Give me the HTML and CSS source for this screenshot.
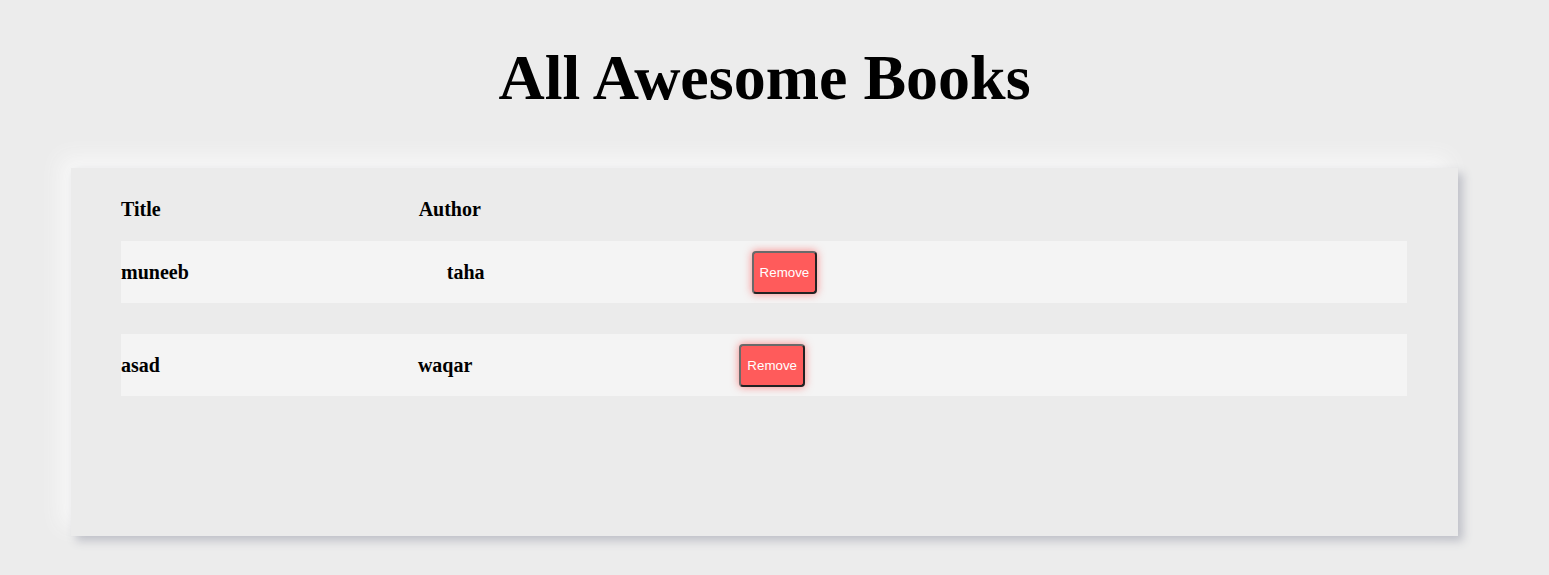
FILE: index.html
```html
<!DOCTYPE html>
<html lang="en">
<head>
<meta charset="utf-8">
<title>Awesome Books</title>
<link rel="stylesheet" href="styles.css">
</head>
<body>
<main class="page">
  <h1 class="page-title">All Awesome Books</h1>
  <section class="card">
    <div class="row row-head">
      <span class="cell">Title</span>
      <span class="cell">Author</span>
    </div>
    <div class="book-list">
      <div class="row book">
        <span class="cell">muneeb</span>
        <span class="cell">taha</span>
        <button class="remove-btn" type="button">Remove</button>
      </div>
      <div class="row book">
        <span class="cell">asad</span>
        <span class="cell">waqar</span>
        <button class="remove-btn" type="button">Remove</button>
      </div>
    </div>
  </section>
</main>
</body>
</html>
```
FILE: styles.css
```css
html, body {
  background: #ececec;
}
body {
  margin: 8px;
  font-family: "Liberation Serif", "Times New Roman", serif;
  color: #000;
}
.page {
  width: 1513px;
  padding-bottom: 20px;
}
.page-title {
  font-size: 64px;
  font-weight: bold;
  text-align: center;
  margin: 33px 0 53px;
  line-height: normal;
}
.card {
  width: 1387px;
  box-sizing: border-box;
  margin: 0 auto;
  min-height: 368px;
  padding: 30px 51px 140px 50px;
  background: #ebebeb;
  box-shadow: 5px 5px 9px #bfc0c8, -10px -10px 20px #f8f8f8;
}
.row {
  display: flex;
  align-items: center;
  gap: 258px;
  font-size: 20px;
  font-weight: bold;
}
.row-head {
  margin-bottom: 20px;
}
.book-list {
  display: flex;
  flex-direction: column;
  gap: 31px;
}
.book {
  height: 62px;
  background: #f4f4f4;
}
.remove-btn {
  margin-left: 9px;
  font-family: "Liberation Sans", Arial, sans-serif;
  font-size: 13.333px;
  color: #fff;
  background: #ff5b5b;
  padding: 12px 6px;
  border: 2px solid;
  border-color: #6a6a6a #222 #222 #6a6a6a;
  border-radius: 4px;
  box-shadow: 0 0 9px rgba(255, 60, 60, 0.6);
  line-height: 15px;
}
```
